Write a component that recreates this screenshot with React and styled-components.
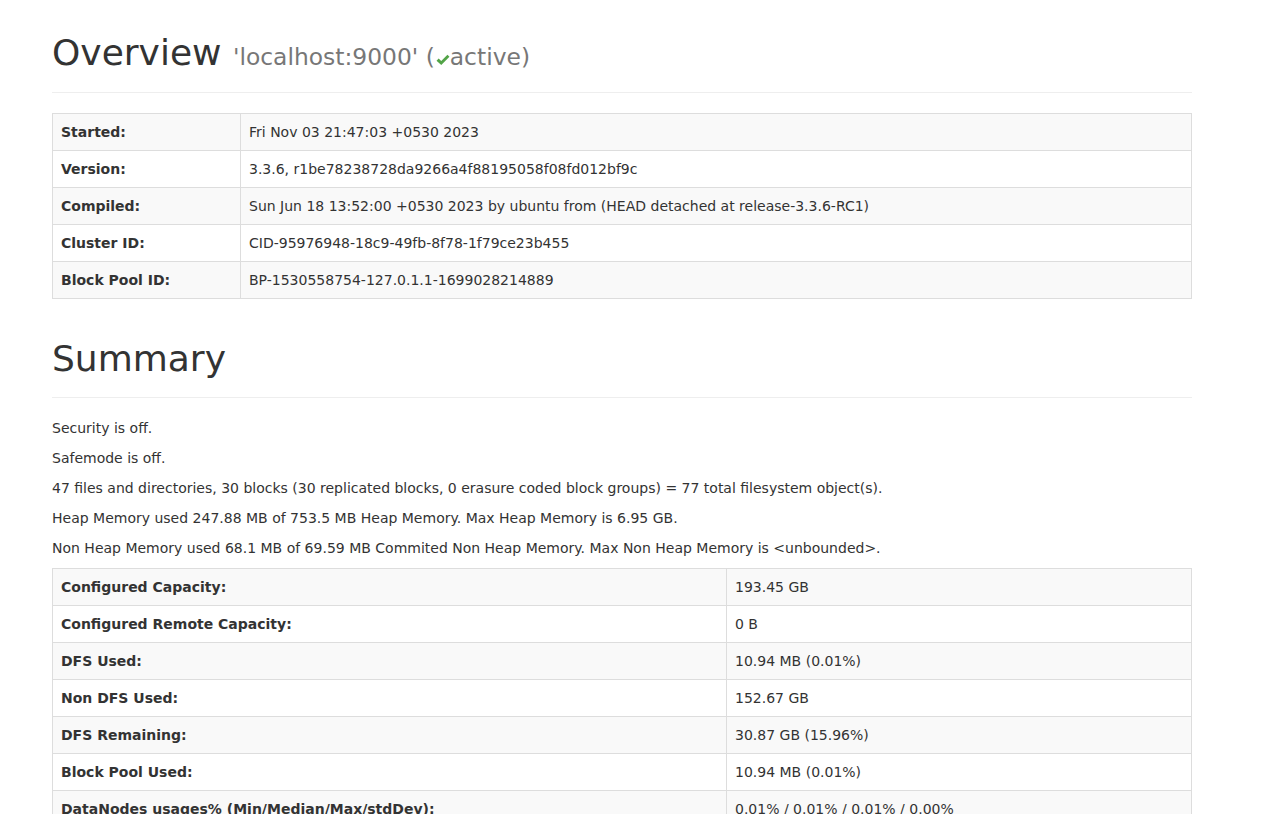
import React from "react";
import styled, { createGlobalStyle } from "styled-components";

const GlobalStyle = createGlobalStyle`
  html, body {
    margin: 0;
    padding: 0;
    background: #fff;
  }
  body {
    font-family: "DejaVu Sans", "Liberation Sans", sans-serif;
    font-size: 14px;
    line-height: 1.42857143;
    color: #333;
  }
`;

const Container = styled.div`
  width: 1140px;
  padding: 0 0 40px 52px;
  overflow: hidden;
`;

const PageHeader = styled.div`
  margin: ${(p) => (p.$first ? "33px" : "40px")} 0 20px;
  padding-bottom: 9px;
  border-bottom: 1px solid #eee;
`;

const Title = styled.h1`
  margin: 0 0 10px;
  font-size: 36px;
  font-weight: 500;
  line-height: 1.1;
  color: #333;
`;

const Sub = styled.small`
  font-size: 65%;
  font-weight: normal;
  line-height: 1;
  color: #777;
`;

const Check = styled.svg`
  width: 14px;
  height: 12px;
  margin-left: 1px;
  vertical-align: -1px;
  fill: #52a447;
`;

const Table = styled.table`
  width: 100%;
  border-collapse: collapse;
  border-spacing: 0;
  border: 1px solid #ddd;
  margin-bottom: 20px;
`;

const Row = styled.tr`
  background: ${(p) => (p.$odd ? "#f9f9f9" : "#fff")};
`;

const Th = styled.th`
  width: ${(p) => p.$w}px;
  padding: 8px;
  text-align: left;
  font-weight: bold;
  line-height: 1.42857143;
  vertical-align: top;
  border: 1px solid #ddd;
`;

const Td = styled.td`
  padding: 8px;
  line-height: 1.42857143;
  vertical-align: top;
  border: 1px solid #ddd;
`;

const Para = styled.p`
  margin: 0 0 10px;
`;

const overview = [
  ["Started:", "Fri Nov 03 21:47:03 +0530 2023"],
  ["Version:", "3.3.6, r1be78238728da9266a4f88195058f08fd012bf9c"],
  ["Compiled:", "Sun Jun 18 13:52:00 +0530 2023 by ubuntu from (HEAD detached at release-3.3.6-RC1)"],
  ["Cluster ID:", "CID-95976948-18c9-49fb-8f78-1f79ce23b455"],
  ["Block Pool ID:", "BP-1530558754-127.0.1.1-1699028214889"],
];

const notes = [
  "Security is off.",
  "Safemode is off.",
  "47 files and directories, 30 blocks (30 replicated blocks, 0 erasure coded block groups) = 77 total filesystem object(s).",
  "Heap Memory used 247.88 MB of 753.5 MB Heap Memory. Max Heap Memory is 6.95 GB.",
  "Non Heap Memory used 68.1 MB of 69.59 MB Commited Non Heap Memory. Max Non Heap Memory is <unbounded>.",
];

const summary = [
  ["Configured Capacity:", "193.45 GB"],
  ["Configured Remote Capacity:", "0 B"],
  ["DFS Used:", "10.94 MB (0.01%)"],
  ["Non DFS Used:", "152.67 GB"],
  ["DFS Remaining:", "30.87 GB (15.96%)"],
  ["Block Pool Used:", "10.94 MB (0.01%)"],
  ["DataNodes usages% (Min/Median/Max/stdDev):", "0.01% / 0.01% / 0.01% / 0.00%"],
];

const InfoTable = ({ rows, thWidth }) => (
  <Table>
    <tbody>
      {rows.map(([k, v], i) => (
        <Row key={k} $odd={i % 2 === 0}>
          <Th $w={thWidth}>{k}</Th>
          <Td>{v}</Td>
        </Row>
      ))}
    </tbody>
  </Table>
);

export default function App() {
  return (
    <>
      <GlobalStyle />
      <Container>
        <PageHeader $first>
          <Title>
            Overview{" "}
            <Sub>
              'localhost:9000' (
              <Check viewBox="0 0 15 13">
                <path d="M0.5 7.2 L2.8 5 L5.6 7.6 L12.3 0.8 L14.5 3 L5.6 12 Z" />
              </Check>
              active)
            </Sub>
          </Title>
        </PageHeader>
        <InfoTable rows={overview} thWidth={171} />

        <PageHeader>
          <Title>Summary</Title>
        </PageHeader>
        {notes.map((n) => (
          <Para key={n}>{n}</Para>
        ))}
        <InfoTable rows={summary} thWidth={657} />
      </Container>
    </>
  );
}
